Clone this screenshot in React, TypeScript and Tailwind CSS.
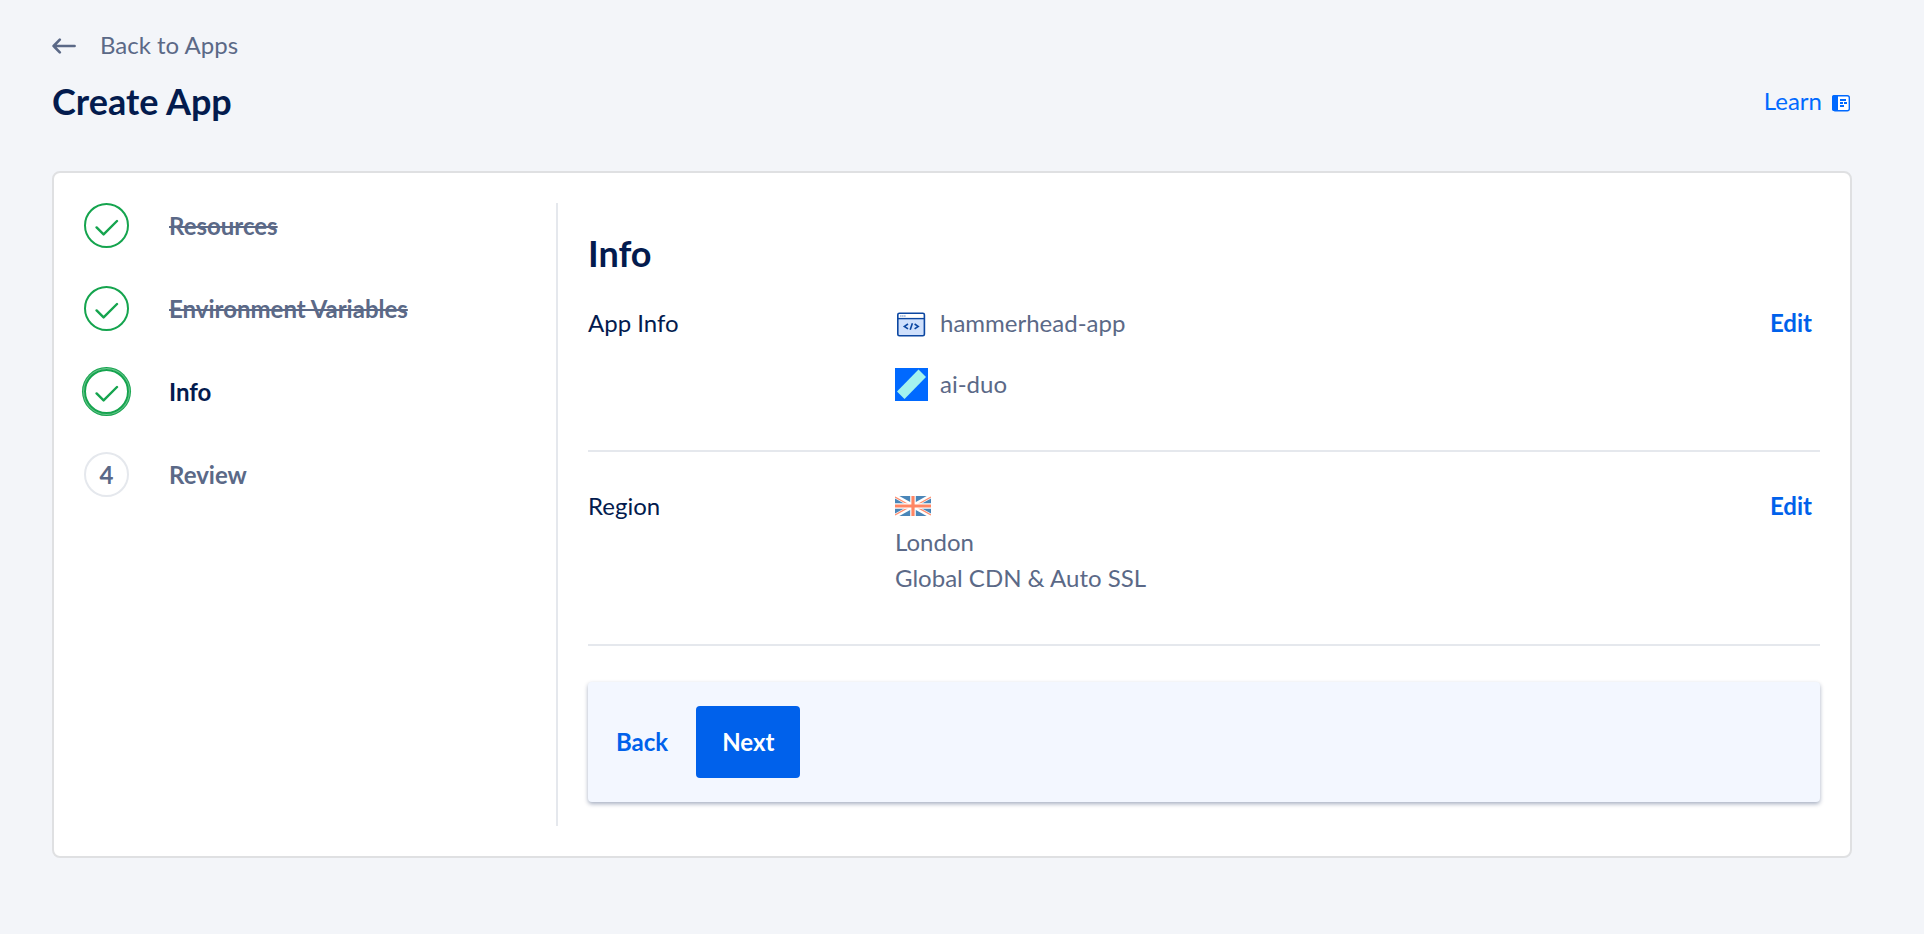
import React from 'react';
import clsx from 'clsx';

interface Step {
  label: string;
  status: 'done' | 'current' | 'pending';
}

const steps: Step[] = [
  { label: 'Resources', status: 'done' },
  { label: 'Environment Variables', status: 'done' },
  { label: 'Info', status: 'current' },
  { label: 'Review', status: 'pending' },
];

function ArrowLeftIcon() {
  return (
    <svg width="24" height="18" viewBox="0 -2 24 18" fill="none" stroke="currentColor" strokeWidth="2.6" strokeLinecap="round" strokeLinejoin="round" aria-hidden="true">
      <path d="M22.6 8H1.6M7.8 1.6 1.6 8l6.2 6.4" />
    </svg>
  );
}

function LearnIcon() {
  return (
    <svg width="18" height="22" viewBox="0 -4 18 22" aria-hidden="true">
      <rect x="0.7" y="1.7" width="16.6" height="15" rx="2" fill="#fff" stroke="#0069ff" strokeWidth="1.4" />
      <path d="M2 1h4v16H2a2 2 0 0 1-2-2V3a2 2 0 0 1 2-2z" fill="#0069ff" />
      <path d="M8 6h6M8 9h3M12 9h3M8 12h4" stroke="#0069ff" strokeWidth="1.8" />
    </svg>
  );
}

function CheckIcon() {
  return (
    <svg width="24" height="18" viewBox="0 0 24 18" fill="none" stroke="currentColor" strokeWidth="2.4" strokeLinecap="round" strokeLinejoin="round" aria-hidden="true">
      <path d="M1.6 8.4 8.6 15.4 22 2" />
    </svg>
  );
}

function CodeWindowIcon() {
  return (
    <svg width="33" height="30" viewBox="0 -4 33 30" aria-hidden="true">
      <rect x="2.8" y="1.2" width="26.6" height="22.6" rx="1.6" fill="#cfe0fc" />
      <path d="M3.4 1.8h25.4v5H3.4z" fill="#fff" />
      <rect x="2.8" y="1.2" width="26.6" height="22.6" rx="1.6" fill="none" stroke="#0c47a1" strokeWidth="1.6" />
      <path d="M2.8 6.6h26.6" stroke="#0c47a1" strokeWidth="1.4" />
      <path d="M5.4 4h1M7.4 4h1M9.4 4h1" stroke="#0c47a1" strokeWidth="1" />
      <path d="m13 12-3.6 2.4 3.6 2.4M19.6 12l3.6 2.4-3.6 2.4M17.4 11.2l-2.2 6.6" fill="none" stroke="#0c47a1" strokeWidth="1.6" />
    </svg>
  );
}

function ProjectIcon() {
  return (
    <svg width="33" height="33" viewBox="0 0 33 33" aria-hidden="true">
      <path d="M0 0h33v33H0z" fill="#0069ff" />
      <path d="M23.5 1.5 31 9 9.5 31 2 23.5z" fill="#a3f3ee" />
    </svg>
  );
}

function UkFlag() {
  return (
    <svg width="36" height="20" viewBox="0 0 36 20" role="img" aria-label="United Kingdom">
      <path d="M0 0h36v20H0z" fill="#4a86b8" />
      <path d="M0 0 36 20M36 0 0 20" stroke="#fff" strokeWidth="4.2" />
      <path d="M0 1 16 10M20 10 36 19M36 1 20 10M16 10 0 19" stroke="#ff8f70" strokeWidth="1.4" />
      <path d="M18 0v20M0 10h36" stroke="#fff" strokeWidth="5.6" />
      <path d="M18 0v20M0 10h36" stroke="#ff8664" strokeWidth="3.2" />
    </svg>
  );
}

function StepItem({ step, number }: { step: Step; number: number }) {
  const pending = step.status === 'pending';

  return (
    <li className="flex items-center gap-10" aria-current={step.status === 'current' ? 'step' : undefined}>
      <span
        className={clsx(
          'flex size-[45px] shrink-0 items-center justify-center rounded-full border-2',
          pending ? 'border-[#e5e8ed]' : 'border-[#15a44e] pt-1 text-[#15a44e]',
          step.status === 'current' && 'shadow-[0_0_0_1px_#6cc58f,0_0_0_2px_#15a44e]',
        )}
      >
        {pending ? number : <CheckIcon />}
      </span>
      <span
        className={clsx(
          step.status === 'done' && 'line-through decoration-2',
          step.status === 'current' && 'text-[#031b4e]',
        )}
      >
        {step.label}
      </span>
    </li>
  );
}

function InfoRow({ title, children }: { title: string; children: React.ReactNode }) {
  return (
    <section className="flex items-start border-b-2 border-[#e5e8ed] pb-12">
      <h3 className="w-[307px] text-[#031b4e]">{title}</h3>
      <div className="flex-1">{children}</div>
      <button type="button" className="px-2 font-bold text-[#0061eb]">
        Edit
      </button>
    </section>
  );
}

export default function App() {
  return (
    <div className="min-h-screen bg-[#f3f5f9] pt-[27px] pr-[72px] pb-19 pl-[52px] font-['Lato',sans-serif] text-2xl leading-9 text-[#5b6987]">
      <header>
        <a href="#apps" className="inline-flex items-center gap-6">
          <ArrowLeftIcon />
          Back to Apps
        </a>
        <div className="mt-4 flex items-center justify-between">
          <h1 className="text-4xl leading-11 font-bold text-[#031b4e]">Create App</h1>
          <a href="#learn" className="flex items-center gap-2.5 pr-0.5 text-[#0069ff]">
            Learn
            <LearnIcon />
          </a>
        </div>
      </header>

      <main className="mt-12 flex rounded-lg border-2 border-[#dfe0e2] bg-white p-[30px]">
        <ol className="flex w-[472px] shrink-0 flex-col gap-[38px] font-bold">
          {steps.map((step, index) => (
            <StepItem key={step.label} step={step} number={index + 1} />
          ))}
        </ol>

        <div className="flex-1 border-l-2 border-[#e5e8ed] pb-6 pl-[30px]">
          <h2 className="mt-8 mb-[34px] text-4xl leading-9 font-bold text-[#031b4e]">Info</h2>

          <InfoRow title="App Info">
            <ul className="flex flex-col gap-[25px]">
              <li className="flex items-center gap-3">
                <CodeWindowIcon />
                hammerhead-app
              </li>
              <li className="flex items-center gap-3">
                <ProjectIcon />
                ai-duo
              </li>
            </ul>
          </InfoRow>

          <div className="pt-9">
            <InfoRow title="Region">
              <div className="flex h-9 items-center">
                <UkFlag />
              </div>
              <p>London</p>
              <p>Global CDN &amp; Auto SSL</p>
            </InfoRow>
          </div>

          <div className="mt-9 flex items-center gap-7 rounded bg-[#f3f7ff] py-6 pl-7 font-bold shadow-[0_2px_4px_rgba(3,27,78,0.35)]">
            <button type="button" className="text-[#0061eb]">
              Back
            </button>
            <button type="button" className="h-18 rounded bg-[#0061eb] px-[26px] text-white">
              Next
            </button>
          </div>
        </div>
      </main>
    </div>
  );
}
